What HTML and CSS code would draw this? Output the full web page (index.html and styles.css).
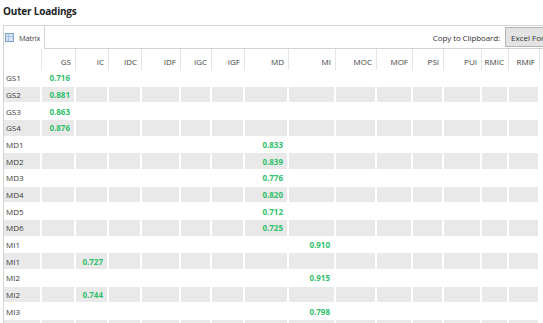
FILE: index.html
```html
<!DOCTYPE html>
<html>
<head>
<meta charset="utf-8">
<link rel="stylesheet" href="styles.css">
</head>
<body>
<div class="title">Outer Loadings</div>
<div class="panel">
  <div class="tabbar">
    <div class="tab">
      <svg class="tab-icon" width="9" height="9" viewBox="0 0 9 9">
        <rect x="0.5" y="0.5" width="8" height="8" fill="#d4e3f5" stroke="#7f9fc8"/>
        <line x1="0.5" y1="3.5" x2="8.5" y2="3.5" stroke="#a9c1e0"/>
        <line x1="3.5" y1="0.5" x2="3.5" y2="8.5" stroke="#a9c1e0"/>
      </svg>
      <span class="tab-label">Matrix</span>
    </div>
    <div class="tab-rest">
      <span class="copy-label">Copy to Clipboard:</span>
      <button class="btn">Excel Format</button>
    </div>
  </div>
  <table class="grid">
    <colgroup>
      <col style="width:38px"><col style="width:34px"><col style="width:33px"><col style="width:33px"><col style="width:39px"><col style="width:31px"><col style="width:33px"><col style="width:44px"><col style="width:47px"><col style="width:41px"><col style="width:36px"><col style="width:31px"><col style="width:38px"><col style="width:27px"><col style="width:31px">
    </colgroup>
    <thead>
      <tr class="head">
        <th></th><th>GS</th><th>IC</th><th>IDC</th><th>IDF</th><th>IGC</th><th>IGF</th><th>MD</th><th>MI</th><th>MOC</th><th>MOF</th><th>PSI</th><th>PUI</th><th>RMIC</th><th>RMIF</th>
      </tr>
    </thead>
    <tbody id="rows"></tbody>
  </table>
</div>
<script src="script.js"></script>
</body>
</html>
```
FILE: script.js
```js
const cols = ["GS","IC","IDC","IDF","IGC","IGF","MD","MI","MOC","MOF","PSI","PUI","RMIC","RMIF"];
const data = [
  ["GS1","GS","0.716"],["GS2","GS","0.881"],["GS3","GS","0.863"],["GS4","GS","0.876"],
  ["MD1","MD","0.833"],["MD2","MD","0.839"],["MD3","MD","0.776"],["MD4","MD","0.820"],
  ["MD5","MD","0.712"],["MD6","MD","0.725"],["MI1","MI","0.910"],["MI1","IC","0.727"],
  ["MI2","MI","0.915"],["MI2","IC","0.744"],["MI3","MI","0.798"],["","",""]
];
const tb = document.getElementById("rows");
data.forEach((r, i) => {
  const tr = document.createElement("tr");
  tr.className = i % 2 ? "alt" : "";
  const th = document.createElement("td");
  th.className = "lbl";
  th.textContent = r[0];
  tr.appendChild(th);
  cols.forEach(c => {
    const td = document.createElement("td");
    if (c === r[1]) { td.textContent = r[2]; td.className = "val"; }
    tr.appendChild(td);
  });
  tb.appendChild(tr);
});
```
FILE: styles.css
```css
html, body { margin: 0; padding: 0; background: #fff; overflow: hidden; }
body { font-family: "Open Sans", "Noto Sans", sans-serif; color: #333; width: 543px; height: 323px; }
.title { height: 25px; padding-left: 3px; font-weight: 700; font-size: 10px; line-height: 22px; color: #222; letter-spacing: -0.2px; }
.panel { margin-left: 3px; border-left: 1px solid #d4d4d4; border-top: 1px solid #d4d4d4; }
.tabbar { display: flex; height: 23px; }
.tab { width: 41px; flex: none; display: flex; align-items: center; gap: 5px; padding-left: 1px; border-right: 1px solid #d4d4d4; font-size: 8px; color: #444; box-sizing: border-box; }
.tab-label { font-size: 7.5px; letter-spacing: -0.2px; }
.tab-icon { flex: none; }
.tab-rest { flex: 1; display: flex; align-items: center; justify-content: flex-end; border-bottom: 1px solid #d4d4d4; gap: 5px; overflow: hidden; }
.copy-label { font-size: 8px; color: #333; letter-spacing: -0.1px; }
.btn { flex: none; width: 40px; height: 20px; margin: 0; padding: 0 0 0 5px; border: 1px solid #b4b4b4; background: #e3e3e3; font-family: inherit; font-size: 8px; color: #333; text-align: left; white-space: nowrap; overflow: hidden; margin-right: -2px; }
.grid { table-layout: fixed; border-collapse: separate; border-spacing: 0; width: 536px; font-size: 8px; }
.grid th, .grid td { padding: 0 4px 0 0; text-align: right; white-space: nowrap; overflow: hidden; box-sizing: border-box; }
.head th { height: 21px; font-weight: 400; color: #444; border-right: 1px solid #e6e6e6; vertical-align: bottom; padding-bottom: 3px; }
.grid td { height: 16.67px; border-right: 2px solid #fff; border-bottom: 1px solid #fff; }
.grid tr.alt td { background: #e9e9e9; }
.grid td.lbl { text-align: left; padding-left: 2px; color: #3a3a3a; }
.grid td.val { color: #2fc06c; font-weight: 700; }
```
